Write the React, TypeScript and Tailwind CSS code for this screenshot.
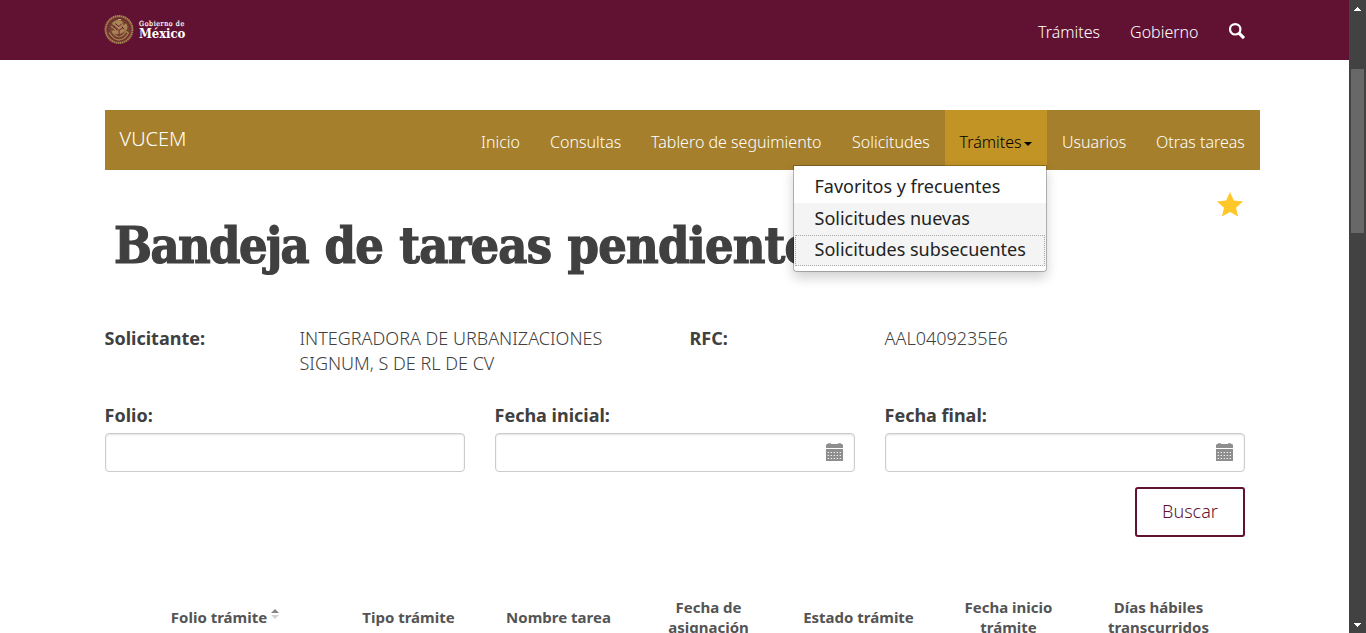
import type { ReactNode } from "react";

const navItems = [
  { label: "Inicio", width: "w-[69px]" },
  { label: "Consultas", width: "w-[101px]" },
  { label: "Tablero de seguimiento", width: "w-[201px]" },
  { label: "Solicitudes", width: "w-[108px]" },
  { label: "Trámites", width: "w-[102px]", active: true },
  { label: "Usuarios", width: "w-[94px]" },
  { label: "Otras tareas", width: "w-[119px]" },
];

const columns = [
  ["Tipo trámite"],
  ["Nombre tarea"],
  ["Fecha de", "asignación"],
  ["Estado trámite"],
  ["Fecha inicio", "trámite"],
  ["Días hábiles", "transcurridos"],
];

function Seal() {
  return (
    <svg width="30" height="30" viewBox="0 0 30 30" fill="none" className="shrink-0">
      <circle cx="15" cy="15.500" r="14" fill="#74402f" />
      <circle cx="15" cy="15.500" r="13.500" stroke="#a98455" strokeWidth="1.900" strokeDasharray="1.500 .6" />
      <circle cx="15" cy="15.500" r="11.200" stroke="#6b1f31" strokeWidth=".8" />
      <path d="M8 9.500c2-3 6-4.500 9-3 2 1 3 3 2 5l3-2c2 2 2 5 0 7l-3 2-4 2-5-1-3-3 4 0-3-3 4 1z" fill="#a98455" />
      <path d="M5 18.500c3 5 7 7.500 10 7.500s7-2.500 10-7.500M8 17.500c2 3 5 5 7 5s5-2 7-5" stroke="#a98455" strokeWidth="1.300" />
      <path d="M11 9.500l4 3 3-3M12 13.500l3 3 4-3M10 11.500l3 5M15 16.500v6M18 12.500l2 3" stroke="#64152f" strokeWidth=".9" />
      <path d="M7 12.500l2 1M22 17.500l2 1M14 5.500h3" stroke="#c4a46c" strokeWidth="1" />
    </svg>
  );
}

function SearchIcon() {
  return (
    <svg width="17" height="17" viewBox="0 0 17 17" fill="none" stroke="#fff">
      <circle cx="6.200" cy="6.300" r="5.200" strokeWidth="2.200" />
      <path d="M10 10.200l5 5" strokeWidth="3.200" />
    </svg>
  );
}

function CalendarIcon() {
  const dots: ReactNode[] = [];
  for (let r = 0; r < 3; r++) {
    for (let c = 0; c < 5; c++) {
      dots.push(<rect key={`${r}-${c}`} x={1.7 + c * 3} y={9 + r * 3} width="1.200" height="1" fill="#fff" />);
    }
  }
  return (
    <svg width="17" height="18" viewBox="0 0 17 18" fill="#8e8e8e">
      <path d="M0 5V2.500C0 1.500.6 1 1.500 1H2V.3h3V1h7V.3h3V1h.5c.9 0 1.500.5 1.500 1.500V5z" />
      <rect y="6" width="17" height="12" />
      {dots}
    </svg>
  );
}

function Field({ label, calendar }: { label: string; calendar?: boolean }) {
  return (
    <label className="flex w-[360px] flex-col gap-[5px] pt-px">
      <span className="-ml-[0.5px] text-[18px] leading-[25px] font-bold">{label}</span>
      <span className="flex h-[39px] items-center justify-end rounded-[4px] border border-[#ccc] pr-[11px] pb-px shadow-[inset_0_1px_2px_rgba(0,0,0,0.12)]">
        {calendar && <CalendarIcon />}
      </span>
    </label>
  );
}

function TramitesMenu() {
  return (
    <ul className="absolute top-[55px] right-0 z-10 h-[107px] w-[254px] rounded-b-[4px] border border-black/25 bg-white bg-clip-padding py-[5px] text-[18px] leading-[25px] font-normal text-[#222] shadow-[0_6px_12px_rgba(0,0,0,0.18)]">
      <li className="h-[32px] pt-[3px] pl-[20.5px]">Favoritos y frecuentes</li>
      <li className="h-[32px] bg-[#f4f4f4] pt-[3px] pl-[20.5px]">Solicitudes nuevas</li>
      <li className="mx-px h-[31px] bg-[#f4f4f4] pt-[2px] pl-[19.5px] shadow-[-1px_0_#f4f4f4,1px_0_#f4f4f4] outline-1 -outline-offset-1 outline-dotted outline-[#a8a8a8]">
        Solicitudes subsecuentes
      </li>
    </ul>
  );
}

function ScrollBar() {
  return (
    <div className="flex w-[17px] shrink-0 flex-col items-center bg-[#424242] pt-[7px] pb-[6px]">
      <svg width="7" height="4" viewBox="0 0 7 4" fill="#fff" shapeRendering="crispEdges">
        <path d="M3 0h1v1h1v1h1v1h1v1H0V3h1V2h1V1h1z" />
      </svg>
      <div className="mt-[58px] h-[164px] w-[13px] bg-[#686868]" />
      <svg className="mt-auto" width="7" height="4" viewBox="0 0 7 4" fill="#fff" shapeRendering="crispEdges">
        <path d="M0 0h7v1H6v1H5v1H4v1H3V3H2V2H1V1H0z" />
      </svg>
    </div>
  );
}

export default function App() {
  return (
    <div className="flex h-[633px] w-[1366px] overflow-hidden bg-white font-['Noto_Sans','Open_Sans',sans-serif] text-[#404041]">
      <div className="flex w-[1349px] flex-col">
        <header className="flex h-[60px] shrink-0 items-start bg-[#611232] pl-[104px] text-white">
          <div className="flex gap-[5px] pt-[14px]">
            <Seal />
            <div className="flex flex-col pt-[5px] font-['DejaVu_Serif_Condensed','DejaVu_Serif',serif]">
              <span className="text-[7px] leading-[10px] tracking-[0.6px] whitespace-nowrap [-webkit-text-stroke:0.2px_#fff]">Gobierno de</span>
              <span className="text-[13px] leading-[9px] font-bold tracking-[-0.1px]">México</span>
            </div>
          </div>
          <nav className="ml-auto flex gap-[30px] pt-[22px] pr-[103.5px] text-[16px] leading-[20px] font-light">
            <span>Trámites</span>
            <span>Gobierno</span>
            <span className="pt-px">
              <SearchIcon />
            </span>
          </nav>
        </header>

        <main className="ml-[105px] flex w-[1155px] flex-col pt-[50px]">
          <div className="flex h-[60px] shrink-0 bg-[#a57f2c] pl-[14.5px] font-light text-white">
            <span className="pt-[19px] text-[20px] leading-[20px]">VUCEM</span>
            <nav className="ml-auto flex text-[16px] leading-[20px] whitespace-nowrap">
              {navItems.map((item) =>
                item.active ? (
                  <div key={item.label} className={`${item.width} relative flex bg-[#c29325] pt-[22px] pl-[14.5px] text-black`}>
                    {item.label}
                    <svg className="mt-[10px] ml-[2px]" width="8" height="4" viewBox="0 0 8 4">
                      <path d="M0 0h8L4 4z" />
                    </svg>
                    <TramitesMenu />
                  </div>
                ) : (
                  <div key={item.label} className={`${item.width} pt-[22px] pl-[15px]`}>
                    {item.label}
                  </div>
                ),
              )}
            </nav>
          </div>

          <div className="flex h-[156px] shrink-0 items-start justify-between pr-[17px] pl-[9px]">
            <h1 className="pt-[46px] font-['DejaVu_Serif_Condensed','DejaVu_Serif',serif] text-[50px] leading-[60px] font-bold tracking-[-0.8px] [word-spacing:1.5px] whitespace-nowrap [-webkit-text-stroke:1.2px_#404041]">
              <span className="tracking-[-1.6px]">Bandeja</span> de tareas pendientes
            </h1>
            <svg className="mt-[22px]" width="26" height="25" viewBox="0 0 26 25" fill="#ffc728">
              <path d="M13 0l3.800 8.600 9.200.9-7 6.200 2.100 8.700L13 19.900l-8.100 4.500L7 15.700 0 9.500l9.200-.9z" />
            </svg>
          </div>

          <dl className="-ml-[0.5px] flex h-[76px] shrink-0 text-[18px] leading-[25px]">
            <dt className="w-[195px] font-bold">Solicitante:</dt>
            <dd className="w-[390px] pr-[60px] font-light">INTEGRADORA DE URBANIZACIONES SIGNUM, S DE RL DE CV</dd>
            <dt className="w-[195px] font-bold">RFC:</dt>
            <dd className="font-light">AAL0409235E6</dd>
          </dl>

          <form className="flex gap-[30px]">
            <Field label="Folio:" />
            <Field label="Fecha inicial:" calendar />
            <Field label="Fecha final:" calendar />
          </form>

          <div className="flex justify-end pt-[15px] pr-[15px]">
            <button className="h-[50px] w-[110px] rounded-[3px] border-2 border-[#611232] pb-px text-[18px] leading-[25px] font-light text-[#611232]">
              Buscar
            </button>
          </div>

          <div className="flex items-center pt-[60px] pl-[12px] text-center text-[15px] leading-[20px] font-bold text-[#545454]">
            <div className="flex w-[216px] items-center justify-center gap-[4px]">
              Folio trámite
              <svg className="mb-[6px]" width="8" height="10" viewBox="0 0 8 10">
                <path d="M0 4l4-4 4 4z" fill="#858585" />
                <path d="M0 6h8l-4 4z" fill="#d0d0d0" />
              </svg>
            </div>
            {columns.map((lines) => (
              <div key={lines[0]} className="flex w-[150px] flex-col pl-px">
                {lines.map((line) => (
                  <span key={line}>{line}</span>
                ))}
              </div>
            ))}
          </div>
        </main>
      </div>
      <ScrollBar />
    </div>
  );
}
